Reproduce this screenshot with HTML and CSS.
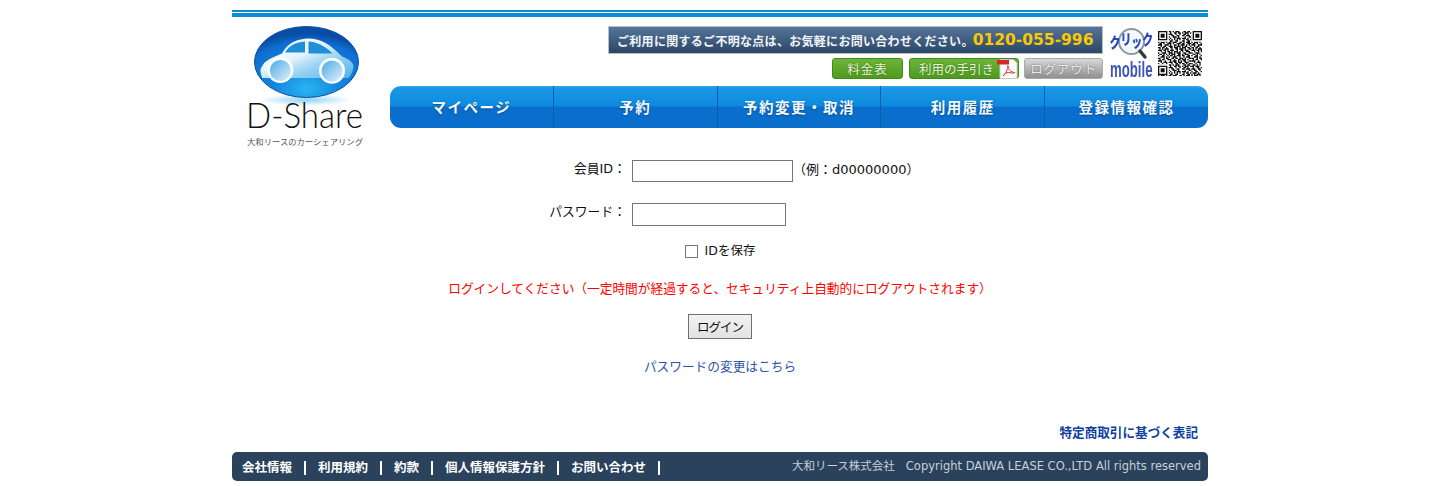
FILE: index.html
```html
<!DOCTYPE html>
<html lang="ja">
<head>
<meta charset="utf-8">
<title>D-Share</title>
<link rel="stylesheet" href="styles.css">
</head>
<body>
<div class="page">
  <div class="topline"></div>
  <header class="header">
    <svg class="logo" viewBox="0 0 158 135" width="158" height="135">
      <defs>
        <radialGradient id="orb" cx="50%" cy="88%" r="78%">
          <stop offset="0" stop-color="#2cb4f0"/>
          <stop offset=".4" stop-color="#1286df"/>
          <stop offset=".85" stop-color="#0f6fd0"/>
          <stop offset="1" stop-color="#0a4da6"/>
        </radialGradient>
        <linearGradient id="bodyfill" x1="0" y1="0" x2="1" y2="1">
          <stop offset="0" stop-color="#ffffff"/>
          <stop offset=".42" stop-color="#e6f5fc"/>
          <stop offset=".62" stop-color="#9ed6f4"/>
          <stop offset="1" stop-color="#4fb0ea"/>
        </linearGradient>
        <linearGradient id="wheelfill" x1="0" y1="0" x2="1" y2="1">
          <stop offset="0" stop-color="#4aa9e4"/>
          <stop offset="1" stop-color="#e0f3fc"/>
        </linearGradient>
        <radialGradient id="glow">
          <stop offset="0" stop-color="#8fd4f5"/>
          <stop offset="1" stop-color="#ffffff"/>
        </radialGradient>
      </defs>
      <ellipse cx="74" cy="83" rx="46" ry="6" fill="url(#glow)"/>
      <ellipse cx="74.500" cy="45" rx="52" ry="35.500" fill="url(#orb)" stroke="#0b4ea0"/>
      <path d="M30 60C28 55 28 52 30 49.500C32 45 36 42 50 36.500C55 28 60 23 75 21.500C88 21 98 27 110 39.500C117 42 122 46 121.500 50C121 54 119 58 116.500 61L30 61Z" fill="url(#bodyfill)"/>
      <path d="M53 35.500C57 29 62 25.500 73 24.500V35.500ZM76.500 24.500C85 25 93 29 100 36V36.500H76.500Z" fill="#1f8fd8"/>
      <circle cx="48.300" cy="53" r="13" fill="#fff"/>
      <circle cx="48.300" cy="53.500" r="10.500" fill="url(#wheelfill)"/>
      <circle cx="100" cy="53.700" r="13" fill="#fff"/>
      <circle cx="100" cy="54" r="10.500" fill="url(#wheelfill)"/>
      <text class="logo-name" x="14" y="111" textLength="117" lengthAdjust="spacingAndGlyphs">D-Share</text>
      <text class="logo-sub" x="15" y="128" textLength="116" lengthAdjust="spacingAndGlyphs">大和リースのカーシェアリング</text>
    </svg>
    <div class="header-right">
      <div class="header-top">
        <div class="contact">
          <div class="banner">
            <span class="banner-text">ご利用に関するご不明な点は、お気軽にお問い合わせください。</span>
            <span class="banner-tel">0120-055-996</span>
          </div>
          <div class="btns">
            <a class="btn btn-green btn-price">料金表</a>
            <a class="btn btn-green btn-guide">利用の手引き
              <svg class="pdf" viewBox="0 0 21 20" width="21" height="20">
                <path d="M3 .500H16L20 4V19.500H3Z" fill="#fff" stroke="#c9c9c9"/>
                <rect x="0" y="1" width="12" height="4.500" fill="#d8262a"/>
                <path d="M6 17C9 14 11 10 10.500 7.500C10 6 12 6.500 11.500 8.500C11.500 11 14 13 18 13.500C16 15 12 13 10 13.500C8 14 7 17 6 17Z" fill="none" stroke="#e0332f"/>
              </svg>
            </a>
            <a class="btn btn-gray btn-logout">ログアウト</a>
          </div>
        </div>
        <svg class="mobile" viewBox="0 0 45 54" width="45" height="54">
          <circle cx="22.500" cy="14.500" r="12.500" fill="#f4f8fb" stroke="#8a98a3" stroke-width="2"/>
          <path d="M31 24L36 30" stroke="#2f3a44" stroke-width="3.500" stroke-linecap="round"/>
          <text class="mobile-jp" transform="translate(.5 20) scale(.84 1.15)"><tspan dy="1">ク</tspan><tspan dy="-3">リ</tspan><tspan dy="2">ッ</tspan><tspan dy="-2">ク</tspan></text>
          <text class="mobile-en" transform="translate(1 50) scale(.6 1)">mobile</text>
        </svg>
        <svg class="qr" viewBox="0 0 33 33" width="44" height="46">
          <defs>
            <path id="qr-tile" class="qr-bits" d="M1 .5h2M4 .5h1M6 .5h1M8 .5h2M11 .5h1M13 .5h3M19 .5h2M22 .5h2M0 1.500h2M3 1.500h3M9 1.500h1M12 1.500h2M15 1.500h2M18 1.500h1M20 1.500h3M24 1.500h1M1 2.500h1M4 2.500h2M7 2.500h1M8 2.500h3M13 2.500h1M16 2.500h1M19 2.500h2M22 2.500h1M0 3.500h3M5 3.500h2M10 3.500h2M14 3.500h2M18 3.500h2M21 3.500h3M2 4.500h2M6 4.500h1M8 4.500h1M11 4.500h3M15 4.500h1M20 4.500h1M23 4.500h2M0 5.500h1M3 5.500h2M7 5.500h1M9 5.500h1M12 5.500h1M14 5.500h3M18 5.500h3M22 5.500h1M1 6.500h3M5 6.500h1M8 6.500h1M10 6.500h1M12 6.500h1M14 6.500h1M16 6.500h1M19 6.500h1M21 6.500h2M24 6.500h1M0 7.500h1M2 7.500h1M4 7.500h3M9 7.500h2M13 7.500h2M18 7.500h2M22 7.500h2M0 8.500h1M2 8.500h3M6 8.500h1M8 8.500h2M11 8.500h3M16 8.500h2M19 8.500h1M21 8.500h3M1 9.500h2M4 9.500h1M7 9.500h3M11 9.500h1M14 9.500h3M18 9.500h2M22 9.500h3M0 10.500h3M5 10.500h1M6 10.500h2M9 10.500h1M12 10.500h2M15 10.500h1M17 10.500h3M21 10.500h1M23 10.500h1M2 11.500h1M4 11.500h2M8 11.500h3M12 11.500h1M14 11.500h3M18 11.500h1M20 11.500h2M24 11.500h1M0 12.500h2M3 12.500h2M6 12.500h1M9 12.500h2M12 12.500h3M16 12.500h1M18 12.500h3M22 12.500h2M1 13.500h1M3 13.500h1M5 13.500h3M10 13.500h1M13 13.500h2M16 13.500h3M20 13.500h1M23 13.500h2M0 14.500h3M4 14.500h2M7 14.500h1M9 14.500h3M14 14.500h1M17 14.500h2M20 14.500h3M2 15.500h1M5 15.500h1M7 15.500h2M10 15.500h1M12 15.500h3M16 15.500h1M18 15.500h1M21 15.500h3M0 16.500h1M3 16.500h3M8 16.500h3M12 16.500h1M14 16.500h3M19 16.500h2M23 16.500h2M1 17.500h2M4 17.500h1M6 17.500h1M8 17.500h1M10 17.500h3M15 17.500h2M18 17.500h1M20 17.500h3M0 18.500h1M3 18.500h2M7 18.500h1M9 18.500h2M12 18.500h1M14 18.500h3M18 18.500h2M22 18.500h2M2 19.500h3M6 19.500h1M8 19.500h1M11 19.500h3M16 19.500h1M19 19.500h1M21 19.500h3M0 20.500h2M4 20.500h1M6 20.500h2M10 20.500h2M13 20.500h2M16 20.500h3M20 20.500h1M23 20.500h2M1 21.500h1M3 21.500h2M7 21.500h1M8 21.500h2M12 21.500h1M15 21.500h2M18 21.500h3M22 21.500h1M0 22.500h3M5 22.500h1M9 22.500h1M11 22.500h3M15 22.500h1M17 22.500h1M19 22.500h2M23 22.500h2M2 23.500h1M4 23.500h3M8 23.500h3M12 23.500h2M15 23.500h3M20 23.500h3M0 24.500h1M3 24.500h1M6 24.500h1M10 24.500h1M13 24.500h2M16 24.500h1M18 24.500h2M21 24.500h1M23 24.500h2"/>
          </defs>
          <use href="#qr-tile"/>
          <use href="#qr-tile" x="25"/>
          <use href="#qr-tile" y="25"/>
          <use href="#qr-tile" x="25" y="25"/>
          <path class="qr-quiet" d="M0 0h8v8H0ZM25 0h8v8h-8ZM0 25h8v8H0Z"/>
          <path class="qr-finder" fill-rule="evenodd" d="M0 0h7v7H0ZM1 1v5h5V1ZM2 2h3v3H2ZM26 0h7v7h-7ZM27 1v5h5V1ZM28 2h3v3h-3ZM0 26h7v7H0ZM1 27v5h5v-5ZM2 28h3v3H2Z"/>
        </svg>
      </div>
      <nav class="nav">
        <a class="nav-item">マイページ</a>
        <a class="nav-item">予約</a>
        <a class="nav-item">予約変更・取消</a>
        <a class="nav-item">利用履歴</a>
        <a class="nav-item">登録情報確認</a>
      </nav>
    </div>
  </header>
  <main class="main">
    <form class="login">
      <div class="field">
        <label class="field-label">会員ID：</label>
        <div class="field-control">
          <input class="input input-id" type="text">
          <span class="hint">（例：d00000000）</span>
        </div>
      </div>
      <div class="field field-pass">
        <label class="field-label">パスワード：</label>
        <div class="field-control">
          <input class="input input-pass" type="password">
        </div>
      </div>
      <label class="remember"><input class="check" type="checkbox"><span class="remember-text">IDを保存</span></label>
      <p class="message">ログインしてください（一定時間が経過すると、セキュリティ上自動的にログアウトされます）</p>
      <div class="submit-row"><button class="submit" type="button">ログイン</button></div>
      <p class="change"><a class="change-link">パスワードの変更はこちら</a></p>
    </form>
    <p class="legal"><a class="legal-link">特定商取引に基づく表記</a></p>
  </main>
  <footer class="footer">
    <ul class="footer-links">
      <li class="footer-item">会社情報</li>
      <li class="footer-item">利用規約</li>
      <li class="footer-item">約款</li>
      <li class="footer-item">個人情報保護方針</li>
      <li class="footer-item">お問い合わせ</li>
    </ul>
    <p class="copyright">大和リース株式会社&nbsp;&nbsp; Copyright DAIWA LEASE CO.,LTD All rights reserved</p>
  </footer>
</div>
</body>
</html>
```

FILE: styles.css
```css
* { box-sizing: border-box; }
html, body { margin: 0; padding: 0; background: #fff; }
body {
  font-family: "DejaVu Sans", "Noto Sans CJK JP", sans-serif;
  font-size: 12px;
  color: #111;
  overflow: hidden;
}
.page { width: 976px; margin: 10px 0 0 232px; }

.topline {
  height: 7px;
  background: linear-gradient(#0a8fd6 0 2px, #fff 2px 3px, #0a8fd6 3px 7px);
}

.header { display: flex; }
.logo { display: block; flex: none; }
.logo-name {
  font-family: "Lato", sans-serif;
  font-weight: 300;
  font-size: 35px;
  fill: #111;
}
.logo-sub {
  font-family: "Noto Sans CJK JP", sans-serif;
  font-size: 8px;
  fill: #555;
}

.header-right { width: 818px; padding-top: 9px; }
.header-top { height: 60px; display: flex; justify-content: flex-end; padding-right: 6px; }
.contact { width: 495px; }
.banner {
  height: 28px;
  display: flex;
  align-items: center;
  padding-left: 8px;
  border: 1px solid #bdbdbd;
  background: linear-gradient(#55749a, #2a4766);
  font-family: "Noto Sans CJK JP", sans-serif;
  white-space: nowrap;
}
.banner-text { color: #f2f5f8; font-weight: 700; font-size: 12px; letter-spacing: .3px; }
.banner-tel {
  margin-left: -1px;
  font-family: "DejaVu Sans", sans-serif;
  font-weight: 700;
  font-size: 15.500px;
  color: #fcc800;
}
.btns { display: flex; justify-content: flex-end; gap: 6px; margin-top: 4px; }
.btn {
  height: 21px;
  display: flex;
  align-items: center;
  justify-content: center;
  border-radius: 3px;
  font-family: "Noto Sans CJK JP", sans-serif;
  font-size: 12.500px;
  white-space: nowrap;
}
.btn-green {
  color: #e6f2dc;
  background: linear-gradient(#6db43a, #4f9a1f);
  border: 1px solid #3f8a18;
  text-shadow: 0 0 2px #2f6d10;
}
.btn-gray {
  color: #e9e9e9;
  background: linear-gradient(#d9d9d9, #8f8f8f);
  border: 1px solid #aaa;
  text-shadow: 0 0 2px #666;
  letter-spacing: .8px;
}
.btn-price { width: 71px; letter-spacing: 1px; }
.btn-guide { width: 110px; gap: 3px; justify-content: flex-end; }
.btn-logout { width: 79px; margin-left: -1px; }
.pdf { display: block; flex: none; }

.mobile { display: block; flex: none; margin: 1px 0 0 6px; filter: blur(.3px); }
.mobile-jp {
  font-family: "Noto Sans CJK JP", sans-serif;
  font-weight: 900;
  font-size: 13px;
  fill: #2747c0;
}
.mobile-en {
  font-family: "Liberation Sans", sans-serif;
  font-weight: 700;
  font-size: 22px;
  fill: #3f55ba;
}
.qr { display: block; flex: none; margin: 4px 0 0 4px; filter: blur(.3px); }
.qr-bits { fill: none; stroke: #111; stroke-width: 1; }
.qr-quiet { fill: #fff; }
.qr-finder { fill: #111; }

.nav {
  height: 42px;
  display: flex;
  border-radius: 11px;
  overflow: hidden;
  background: linear-gradient(#35a9ec 0, #1a98e6 2px, #0e8ade 20px, #0a6fcc 21px, #0a6fcc 100%);
}
.nav-item {
  flex: 1;
  display: flex;
  align-items: center;
  justify-content: center;
  padding-bottom: 2px;
  font-family: "Noto Sans CJK JP", sans-serif;
  font-weight: 700;
  font-size: 14.500px;
  letter-spacing: 1.500px;
  color: #f3f9fe;
  text-shadow: 0 1px 2px #084b8c;
}
.nav-item + .nav-item { border-left: 1px solid #0a5ea8; }

.main { margin-top: 8px; }
.field { display: grid; grid-template-columns: 394px 1fr; column-gap: 6px; }
.field-pass { margin-top: 21px; }
.field-label { text-align: right; font-size: 12.800px; line-height: 18px; white-space: nowrap; }
.field-control { display: flex; align-items: flex-start; }
.input {
  display: block;
  margin: 0;
  padding: 0 2px;
  border: 1px solid #767676;
  background: #fff;
  border-radius: 0;
}
.input-id { width: 161px; height: 22px; }
.input-pass { width: 154px; height: 23px; }
.hint { font-size: 13px; line-height: 20px; }
.remember {
  display: flex;
  align-items: flex-start;
  justify-content: center;
  gap: 7px;
  height: 14px;
  margin-top: 19px;
}
.remember-text { font-size: 12.500px; line-height: 12px; }
.check {
  appearance: none;
  width: 13px;
  height: 13px;
  margin: 0;
  border: 1px solid #767676;
  background: #fff;
}
.message {
  margin: 21px 0 0;
  text-align: center;
  color: #f00;
  font-size: 12.700px;
  line-height: 18px;
}
.submit-row { display: flex; justify-content: center; margin-top: 16px; }
.submit {
  width: 64px;
  height: 25px;
  padding: 0;
  border: 1px solid #707070;
  background: linear-gradient(#f2f2f2, #e2e2e2);
  font-family: "Noto Sans CJK JP", sans-serif;
  font-size: 12.500px;
  letter-spacing: -1px;
  color: #111;
}
.change { margin: 19px 0 0; text-align: center; font-size: 12.700px; line-height: 18px; }
.change-link { color: #2a55a8; }
.legal { margin: 48px 10px 0 0; text-align: right; font-size: 12.600px; line-height: 18px; font-weight: 700; }
.legal-link { color: #0f3fa0; }

.footer {
  height: 29px;
  margin-top: 10px;
  padding: 2px 7px 0 10px;
  display: flex;
  align-items: center;
  justify-content: space-between;
  border-radius: 5px;
  background: #2a425c;
}
.footer-links { display: flex; margin: 0; padding: 0; list-style: none; }
.footer-item {
  padding-right: 12px;
  margin-right: 12px;
  border-right: 2px solid #fff;
  color: #fff;
  font-weight: 700;
  font-size: 12.500px;
  line-height: 14px;
}
.copyright {
  margin: 0 0 3px;
  color: #c8d0d8;
  font-size: 11.500px;
  line-height: 14px;
  white-space: nowrap;
}
```
